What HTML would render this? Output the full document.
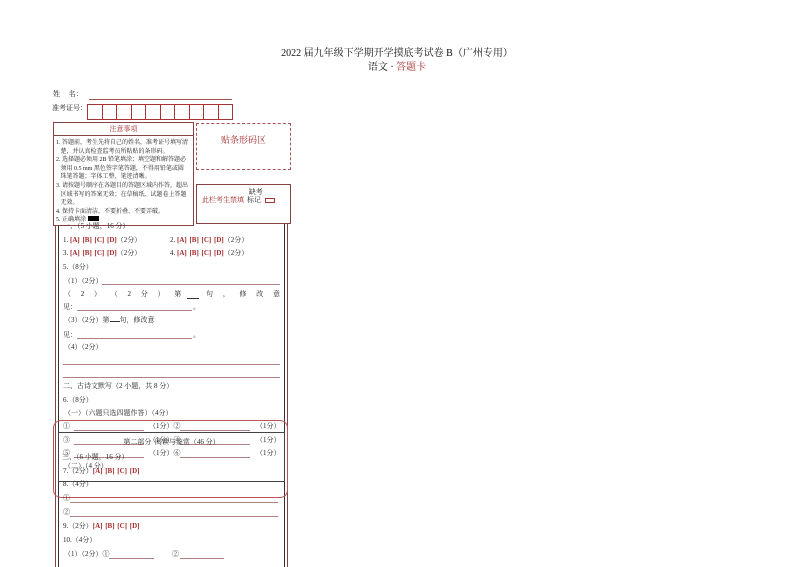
<!DOCTYPE html>
<html><head><meta charset="utf-8"><style>
*{margin:0;padding:0;box-sizing:border-box}
body{width:794px;height:562px;background:#fff;position:relative;overflow:hidden;font-family:"Liberation Serif","Noto Serif CJK SC",serif;color:#222;font-size:7px}
.a{position:absolute;white-space:nowrap;line-height:1}
.r{color:#a52a2a;font-weight:bold;word-spacing:1px}
.ul{position:absolute;height:0;border-top:1px solid #b08080}
.box{position:absolute}
</style></head><body>
<div class="a" style="left:0;width:794px;text-align:center;top:49px;font-size:10px;color:#111">2022 届九年级下学期开学摸底考试卷 B（广州专用）</div>
<div class="a" style="left:0;width:794px;text-align:center;top:63px;font-size:10px;color:#111">语文 · <span style="color:#a52a2a">答题卡</span></div>

<div class="a" style="left:53px;top:91px">姓&nbsp;&nbsp;&nbsp;&nbsp;&nbsp;名：</div>
<div class="ul" style="left:89px;width:143px;top:99px;border-color:#a55"></div>
<div class="a" style="left:52px;top:105px">准考证号：</div>
<div class="box" style="left:87px;top:104px;width:146px;height:16px;border:1px solid #a33;display:flex">
<div style="flex:1;border-right:1px solid #a33"></div><div style="flex:1;border-right:1px solid #a33"></div><div style="flex:1;border-right:1px solid #a33"></div><div style="flex:1;border-right:1px solid #a33"></div><div style="flex:1;border-right:1px solid #a33"></div><div style="flex:1;border-right:1px solid #a33"></div><div style="flex:1;border-right:1px solid #a33"></div><div style="flex:1;border-right:1px solid #a33"></div><div style="flex:1;border-right:1px solid #a33"></div><div style="flex:1"></div></div>

<div class="box" style="left:55px;top:222px;width:233px;height:345px;border-left:1px solid #844;border-right:1px solid #844"></div>
<div class="box" style="left:58px;top:222px;width:227px;height:345px;border-left:1px solid #333;border-right:1px solid #333"></div>

<div class="box" style="left:53px;top:122px;width:141px;height:104px;border:1px solid #844;background:#fff"></div>
<div class="ul" style="left:53px;width:141px;top:135px;border-color:#844"></div>
<div class="a r" style="left:53px;width:141px;text-align:center;top:126px;font-weight:normal">注意事项</div>
<div class="a" style="left:56px;top:139px;font-size:6px;line-height:8.6px;white-space:normal;width:136px">1. 答题前，考生先将自己的姓名，准考证号填写清<br>&nbsp;&nbsp;&nbsp;楚，并认真检查监考员所粘贴的条形码。<br>2. 选择题必须用 2B 铅笔填涂；填空题和解答题必<br>&nbsp;&nbsp;&nbsp;须用 0.5 mm 黑色签字笔答题，不得用铅笔或圆<br>&nbsp;&nbsp;&nbsp;珠笔答题；字体工整、笔迹清晰。<br>3. 请按题号顺序在各题目的答题区域内作答，超出<br>&nbsp;&nbsp;&nbsp;区域书写的答案无效；在草稿纸、试题卷上答题<br>&nbsp;&nbsp;&nbsp;无效。<br>4. 保持卡面清洁，不要折叠、不要弄破。<br>5. 正确填涂 <span style="display:inline-block;width:11px;height:5px;background:#000"></span></div>

<div class="box" style="left:196px;top:123px;width:95px;height:47px;border:1px dashed #a55"></div>
<div class="a" style="left:196px;width:95px;text-align:center;top:136px;color:#a52a2a;font-size:9px">贴条形码区</div>
<div class="box" style="left:196px;top:184px;width:95px;height:40px;border:1px solid #844;background:#fff"></div>
<div class="a r" style="left:202px;top:197px;font-weight:normal">此栏考生禁填</div>
<div class="a" style="left:247px;top:188px;line-height:8px">&nbsp;缺考<br>标记</div>
<div class="box" style="left:265px;top:198px;width:10px;height:5px;border:1px solid #a33"></div>

<div class="a" style="left:63px;top:223px">一、（5 小题，16 分）</div>
<div class="a" style="left:63px;top:237px">1. <span class="r">[A] [B] [C] [D]</span>（2分）</div>
<div class="a" style="left:170px;top:237px">2. <span class="r">[A] [B] [C] [D]</span>（2分）</div>
<div class="a" style="left:63px;top:250px">3. <span class="r">[A] [B] [C] [D]</span>（2分）</div>
<div class="a" style="left:170px;top:250px">4. <span class="r">[A] [B] [C] [D]</span>（2分）</div>
<div class="a" style="left:63px;top:264px">5.（8分）</div>
<div class="a" style="left:64px;top:278px">（1）（2分）</div>
<div class="ul" style="left:102px;width:178px;top:284px"></div>
<div class="a" style="left:64px;top:291px;width:216px;display:flex;justify-content:space-between"><span>（</span><span>2</span><span>）</span><span>（</span><span>2</span><span>分</span><span>）</span><span>第</span><span>&nbsp;&nbsp;&nbsp;</span><span>句</span><span>，</span><span>修</span><span>改</span><span>意</span></div>
<div class="ul" style="left:187px;width:12px;top:298px;border-color:#333"></div>
<div class="a" style="left:63px;top:304px">见：</div>
<div class="ul" style="left:77px;width:115px;top:310px"></div>
<div class="a" style="left:193px;top:304px">。</div>
<div class="a" style="left:64px;top:317px">（3）（2分）第<span style="display:inline-block;width:10px;border-bottom:1px solid #333"></span>句，修改意</div>
<div class="a" style="left:63px;top:332px">见：</div>
<div class="ul" style="left:77px;width:115px;top:338px"></div>
<div class="a" style="left:193px;top:332px">。</div>
<div class="a" style="left:64px;top:344px">（4）（2分）</div>
<div class="ul" style="left:63px;width:217px;top:364px"></div>
<div class="ul" style="left:63px;width:217px;top:377px"></div>
<div class="a" style="left:63px;top:383px">二、古诗文默写（2 小题，共 8 分）</div>
<div class="a" style="left:63px;top:397px">6.（8分）</div>
<div class="a" style="left:64px;top:410px">（一）（六题只选四题作答）（4分）</div>
<div class="a" style="left:63px;top:423px">①</div><div class="ul" style="left:74px;width:70px;top:430px"></div><div class="a" style="left:149px;top:423px">（1分）②</div><div class="ul" style="left:180px;width:70px;top:430px"></div><div class="a" style="left:256px;top:423px">（1分）</div>
<div class="a" style="left:63px;top:437px">③</div><div class="ul" style="left:74px;width:70px;top:444px"></div><div class="a" style="left:149px;top:437px">（1分）④</div><div class="ul" style="left:180px;width:70px;top:444px"></div><div class="a" style="left:256px;top:437px">（1分）</div>
<div class="a" style="left:63px;top:450px">⑤</div><div class="ul" style="left:74px;width:70px;top:457px"></div><div class="a" style="left:149px;top:450px">（1分）⑥</div><div class="ul" style="left:180px;width:70px;top:457px"></div><div class="a" style="left:256px;top:450px">（1分）</div>
<div class="box" style="left:53px;top:420px;width:235px;height:78px;border:1px solid #b55;border-radius:8px"></div>
<div class="box" style="left:58px;top:432px;width:227px;height:50px;border:1px solid #444"></div>
<div class="a" style="left:58px;width:227px;text-align:center;top:439px">第二部分&nbsp; 阅读与鉴赏（46 分）</div>
<div class="a" style="left:62px;top:454px">三、（6 小题，16 分）</div>
<div class="a" style="left:64px;top:463px">（二）（4 分）</div>
<div class="a" style="left:63px;top:468px">7.（2分）<span class="r">[A] [B] [C] [D]</span></div>
<div class="a" style="left:63px;top:481px">8.（4分）</div>
<div class="a" style="left:63px;top:495px">①</div><div class="ul" style="left:70px;width:208px;top:502px"></div>
<div class="a" style="left:63px;top:509px">②</div><div class="ul" style="left:70px;width:208px;top:516px"></div>
<div class="a" style="left:63px;top:523px">9.（2分）<span class="r">[A] [B] [C] [D]</span></div>
<div class="a" style="left:63px;top:537px">10.（4分）</div>
<div class="a" style="left:64px;top:551px">（1）（2分）①</div><div class="ul" style="left:109px;width:45px;top:558px"></div>
<div class="a" style="left:172px;top:551px">②</div><div class="ul" style="left:180px;width:44px;top:558px"></div>
</body></html>
